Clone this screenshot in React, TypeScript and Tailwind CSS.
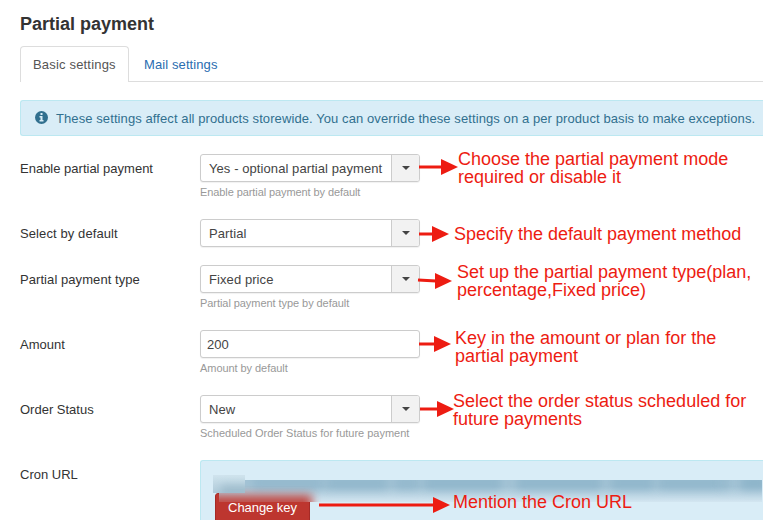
import React from "react";

type Note = { lines: string[]; top: number; gap: number; y: number; y2?: number; head: number; x0: number };
type Field = { label: string; labelClass?: string; value: string; help?: string; helpClass?: string; select?: boolean; note: Note };

const fields: Field[] = [
  { label: "Enable partial payment", value: "Yes - optional partial payment", help: "Enable partial payment by default", helpClass: "tracking-[-0.09px]", select: true,
    note: { lines: ["Choose the partial payment mode", "required or disable it"], top: -4, gap: 40, y: 13, head: 23, x0: 1 } },
  { label: "Select by default", labelClass: "tracking-[0.1px]", value: "Partial", select: true,
    note: { lines: ["Specify the default payment method"], top: 6, gap: 36, y: 15, head: 14, x0: 1 } },
  { label: "Partial payment type", labelClass: "tracking-[0.07px]", value: "Fixed price", help: "Partial payment type by default", helpClass: "tracking-[-0.06px]", select: true,
    note: { lines: ["Set up the partial payment type(plan,", "percentage,Fixed price)"], top: -2, gap: 39, y: 15, y2: 16, head: 17, x0: 0 } },
  { label: "Amount", value: "200", help: "Amount by default", helpClass: "tracking-[-0.06px]",
    note: { lines: ["Key in the amount or plan for the", "partial payment"], top: -1, gap: 37, y: 14, head: 16, x0: 1 } },
  { label: "Order Status", value: "New", help: "Scheduled Order Status for future payment", helpClass: "tracking-[-0.01px]", select: true,
    note: { lines: ["Select the order status scheduled for", "future payments"], top: -3, gap: 35, y: 14, head: 19, x0: 2 } },
];

const smudges = [
  { x: 34, w: 70, o: 0.4 }, { x: 108, w: 60, o: 0.45 }, { x: 176, w: 24, o: 0.4 },
  { x: 206, w: 76, o: 0.5 }, { x: 298, w: 84, o: 0.5 }, { x: 392, w: 42, o: 0.5 }, { x: 440, w: 62, o: 0.45 },
  { x: 503, w: 6, o: 0.5 }, { x: 522, w: 26, o: 0.6 },
];

function Arrow({ x0, y, y2 = y, head }: { x0: number; y: number; y2?: number; head: number }) {
  return (
    <svg className="block h-7 w-full overflow-visible" fill="#ed1c12">
      <line x1={x0} y1={y} x2={head + 1} y2={y2} stroke="#ed1c12" strokeWidth="3" />
      <polygon points={`${head},${y2 - 8} ${head + 17},${y2} ${head},${y2 + 8}`} />
    </svg>
  );
}

function Row({ f }: { f: Field }) {
  const n = f.note;
  return (
    <div className={f.help ? "flex h-[65px]" : "flex h-[46px]"}>
      <label className={`w-[180px] shrink-0 pt-1.5 leading-[18px] ${f.labelClass ?? ""}`}>{f.label}</label>
      <div className="w-[220px] shrink-0">
        <div className="flex h-7 overflow-hidden rounded-[3px] border border-[#ccc] bg-white text-[#444] shadow-[0_1px_1px_rgba(0,0,0,0.06)]">
          <span className={f.select ? "grow whitespace-nowrap pl-2 leading-[27px] tracking-[0.08px]" : "grow pl-1.5 leading-[27px]"}>{f.value}</span>
          {f.select && (
            <span className="flex w-7 items-center justify-center border-l border-[#ccc] bg-[#f2f2f2]">
              <span className="mt-[-1px] border-x-4 border-t-4 border-x-transparent border-t-[#444]" />
            </span>
          )}
        </div>
        {f.help && <p className={`mt-[3px] whitespace-nowrap text-[11px] leading-[15px] text-[#999] ${f.helpClass ?? ""}`}>{f.help}</p>}
      </div>
      <div className="-ml-0.5 shrink-0" style={{ width: n.gap }}>
        <Arrow x0={n.x0} y={n.y} y2={n.y2} head={n.head} />
      </div>
      <div className="shrink-0 whitespace-nowrap text-[18px] leading-[18px] text-[#ed1c12]" style={{ marginTop: n.top }}>
        {n.lines.map((l) => <div key={l}>{l}</div>)}
      </div>
    </div>
  );
}

export default function App() {
  return (
    <main className="h-[520px] w-[763px] overflow-hidden bg-white pl-5 font-['Liberation_Sans',Arial,sans-serif] text-[13px] text-[#333]">
      <h1 className="h-[46px] pt-3 text-[18px] font-bold leading-6">Partial payment</h1>
      <nav className="flex h-9 border-b border-[#ddd]">
        <a className="h-9 w-[109px] rounded-t-[4px] border border-b-0 border-[#ddd] bg-white pl-3 pt-[9px] leading-[18px] tracking-[0.18px] text-[#555]">Basic settings</a>
        <a className="pl-[15px] pt-[10px] leading-[18px] tracking-[0.1px] text-[#2a6db0]">Mail settings</a>
      </nav>
      <div className="mt-[18px] flex h-9 items-center whitespace-nowrap rounded-l-[3px] border border-r-0 border-[#bce8f1] bg-[#d9edf7] pl-3.5 text-[#31708f]">
        <svg className="-mt-0.5 mr-2 size-[13px]" viewBox="0 0 13 13">
          <circle cx="6.5" cy="6.5" r="6.5" fill="#31708f" />
          <path d="M5.5 2h2v2h-2zM4.5 5h3v4h1v1.5h-4V9h1V6.5h-1z" fill="#d9edf7" />
        </svg>
        <span className="pt-px tracking-[0.09px]">These settings affect all products storewide. You can override these settings on a per product basis to make exceptions.</span>
      </div>
      <section className="mt-[18px]">
        {fields.map((f) => <Row key={f.label} f={f} />)}
        <div className="flex h-[60px]">
          <label className="w-[180px] shrink-0 pt-1.5 leading-[18px]">Cron URL</label>
          <div className="relative h-20 grow rounded-tl-[3px] border border-r-0 border-[#bce8f1] bg-[#d9edf7] pl-3.5 pt-8">
            <button className="h-[30px] w-[95px] rounded-[3px] border border-[#a52a26] bg-[#bd362f] leading-7 tracking-[-0.05px] text-white">Change key</button>
            <div className="absolute left-[18px] right-px top-[19px] h-[22px] overflow-hidden bg-linear-to-b from-[#a3c3d5] from-30% to-[#d3e6f1]">
              {smudges.map((s) => (
                <span key={s.x} className="absolute -top-1 h-3.5 bg-[#7fabc3] blur-[4px]" style={{ left: s.x, width: s.w, opacity: s.o }} />
              ))}
              <span className="absolute -left-2 top-[15px] h-5 w-[101px] bg-[#bd362f] opacity-90 blur-[5px]" />
            </div>
            <div className="absolute left-3 top-3.5 h-[18px] w-8 overflow-hidden bg-linear-to-b from-[#d0e4ee] to-[#b0cbd9]">
              <span className="absolute left-2 top-2.5 h-3 w-8 bg-[#8fafc1] opacity-60 blur-[4px]" />
            </div>
            <div className="absolute left-[118px] top-[31px] w-[134px]">
              <Arrow x0={0} y={13} head={114} />
            </div>
            <div className="absolute left-[252px] top-8 whitespace-nowrap text-[18px] leading-[18px] text-[#ed1c12]">Mention the Cron URL</div>
          </div>
        </div>
      </section>
    </main>
  );
}
